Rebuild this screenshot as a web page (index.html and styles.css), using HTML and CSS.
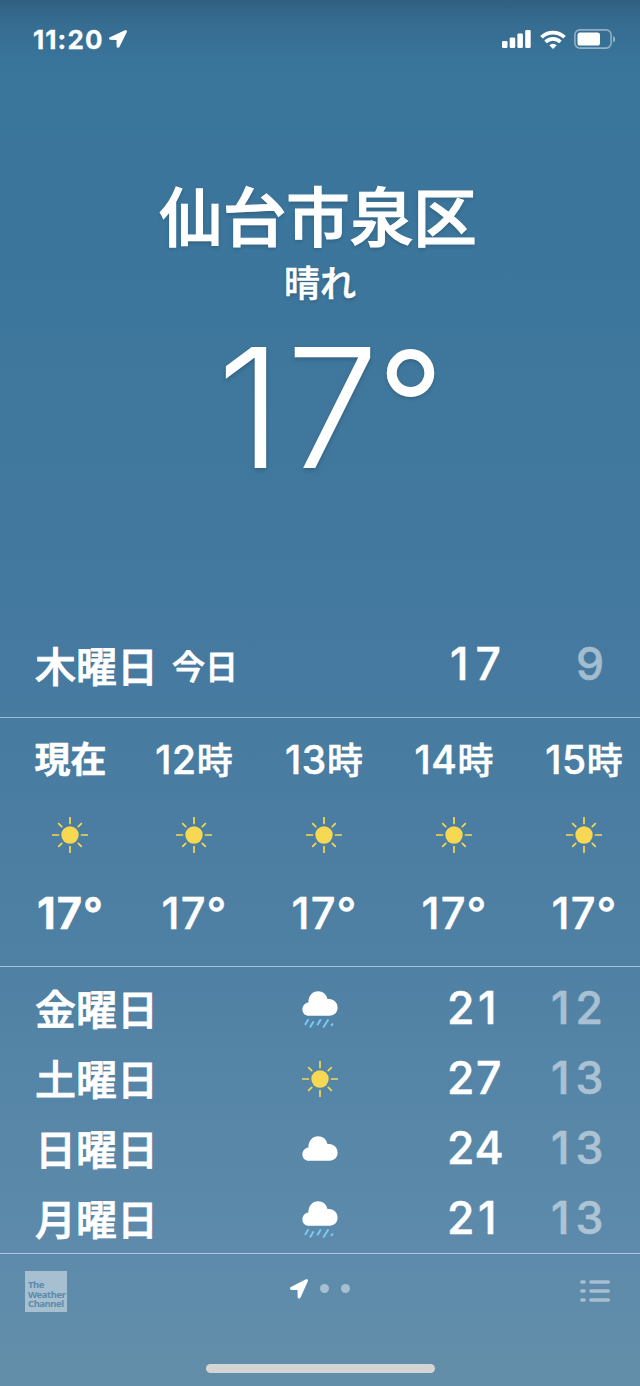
FILE: index.html
```
<!DOCTYPE html>
<html lang="ja">
<head>
    <meta charset="UTF-8">
    <meta name="viewport" content="width=device-width, initial-scale=1.0">
    <title>天気</title>
    <link rel="stylesheet" href="styles.css">
</head>
<body>
    <!-- 共通アイコン -->
    <svg class="sprite" width="0" height="0">
        <symbol id="sun" viewBox="0 0 36 36">
            <circle cx="18" cy="18" r="8.7" fill="#f6d852"/>
            <path d="M18 .3v6.2M18 29.5v6.2M.3 18h6.2M29.5 18h6.2M6.7 6.7l3 3M26.3 26.3l3 3M6.7 29.3l3-3M26.3 9.7l3-3" stroke="#f6d852" stroke-width="1.7" stroke-linecap="round"/>
        </symbol>
        <symbol id="cloud" viewBox="0 0 36 25">
            <path d="M6.8 24.7C3 24.7.4 22 .4 18.4c0-3.600 2.500-6.300 6-6.900C6.300 5 10.300.3 16.200.3c4.500 0 8.200 2.900 9.400 7.900 5.400-.9 10 3 10 8.300 0 4.800-3.300 8.200-8.100 8.200z" fill="#fff"/>
        </symbol>
        <symbol id="rain" viewBox="0 0 36 37">
            <use href="#cloud" width="36" height="25"/>
            <path d="M6 29l-2.600 4.200M11.200 31l-2.800 4.700M18.400 29l-2.700 4.500M26 29l-4.300 6.800M30.400 33.200l-.7.900" stroke="#7cc8f7" stroke-width="2" stroke-linecap="round" fill="none"/>
        </symbol>
        <symbol id="arrow" viewBox="0 0 18 20">
            <path d="M16.200.9L1.200 8.600c-1 .6-.7 1.700.4 1.700l6.500.1.100 7.600c0 1.200 1.200 1.400 1.800.3l7.300-16.200c.3-.9-.3-1.600-1.100-1.200z" fill="#fff" stroke="#fff" stroke-width="1.200" stroke-linejoin="round"/>
        </symbol>
    </svg>

    <div class="phone">
        <header class="status-bar">
            <div class="clock">11:20</div>
            <svg class="clock-arrow" viewBox="0 0 18 20" preserveAspectRatio="none"><use href="#arrow" width="18" height="20"/></svg>
            <div class="status-icons">
                <svg class="signal" width="29" height="18" viewBox="0 0 29 18" fill="#fff">
                    <rect x="0" y="11" width="5.500" height="7" rx="1.300"/>
                    <rect x="7.700" y="7.500" width="5.500" height="10.500" rx="1.300"/>
                    <rect x="15.400" y="3.500" width="5.500" height="14.500" rx="1.300"/>
                    <rect x="23.200" y="0" width="5.500" height="18" rx="1.300"/>
                </svg>
                <svg class="wifi" width="26" height="19" viewBox="0 0 26 19" fill="none" stroke="#fff" stroke-width="3.700">
                    <path d="M1.500 7.300a16.400 16.400 0 0 1 23 0"/>
                    <path d="M5.600 12a10.400 10.400 0 0 1 14.800 0"/>
                    <path d="M13 19l-3.700-3.700a5.300 5.300 0 0 1 7.400 0z" fill="#fff" stroke="none"/>
                </svg>
                <svg class="battery" width="42" height="20" viewBox="0 0 42 20">
                    <rect x=".9" y=".9" width="36.200" height="18.200" rx="5" fill="none" stroke="#fff" stroke-opacity=".45" stroke-width="1.600"/>
                    <rect x="3.500" y="3.500" width="22.500" height="13" rx="2.600" fill="#fff"/>
                    <path d="M39.200 7v6.400c2.500-1 2.500-5.400 0-6.400z" fill="#fff" fill-opacity=".5"/>
                </svg>
            </div>
        </header>

        <section class="current">
            <h1 class="city">仙台市泉区</h1>
            <div class="condition">晴れ</div>
            <div class="temperature">17<span class="degree">°</span></div>
        </section>

        <section class="today">
            <span class="day">木曜日</span>
            <span class="today-label">今日</span>
            <span class="high teen">17</span>
            <span class="low">9</span>
        </section>

        <section class="hourly">
            <div class="hour now">
                <div class="time">現在</div>
                <svg class="sun"><use href="#sun"/></svg>
                <div class="temp">17°</div>
            </div>
            <div class="hour">
                <div class="time"><span>12</span>時</div>
                <svg class="sun"><use href="#sun"/></svg>
                <div class="temp">17°</div>
            </div>
            <div class="hour">
                <div class="time"><span>13</span>時</div>
                <svg class="sun"><use href="#sun"/></svg>
                <div class="temp">17°</div>
            </div>
            <div class="hour">
                <div class="time"><span>14</span>時</div>
                <svg class="sun"><use href="#sun"/></svg>
                <div class="temp">17°</div>
            </div>
            <div class="hour">
                <div class="time"><span>15</span>時</div>
                <svg class="sun"><use href="#sun"/></svg>
                <div class="temp">17°</div>
            </div>
        </section>

        <section class="daily">
            <div class="row">
                <span class="day">金曜日</span>
                <svg class="rain"><use href="#rain"/></svg>
                <span class="high wide">21</span>
                <span class="low">12</span>
            </div>
            <div class="row">
                <span class="day">土曜日</span>
                <svg class="sun"><use href="#sun"/></svg>
                <span class="high">27</span>
                <span class="low">13</span>
            </div>
            <div class="row">
                <span class="day">日曜日</span>
                <svg class="cloud"><use href="#cloud"/></svg>
                <span class="high tight">24</span>
                <span class="low">13</span>
            </div>
            <div class="row">
                <span class="day">月曜日</span>
                <svg class="rain"><use href="#rain"/></svg>
                <span class="high wide">21</span>
                <span class="low">13</span>
            </div>
        </section>

        <footer class="toolbar">
            <div class="channel">
                <div>The</div>
                <div>Weather</div>
                <div>Channel</div>
            </div>
            <div class="pager">
                <svg class="pager-arrow" viewBox="0 0 18 20"><use href="#arrow" width="18" height="20"/></svg>
                <span class="dot"></span>
                <span class="dot"></span>
            </div>
            <svg class="list" width="30" height="22" viewBox="0 0 30 22" stroke="#fff" stroke-opacity=".45" stroke-width="3.600" stroke-linecap="round">
                <path d="M1.900 2h2.200M11 2h17.200M1.900 11h2.200M11 11h17.200M1.900 20h2.200M11 20h17.200"/>
            </svg>
        </footer>
        <div class="home-bar"></div>
    </div>
</body>
</html>
```
FILE: styles.css
```
* {
    box-sizing: border-box;
}

body {
    margin: 0;
    font-family: Inter, 'Noto Sans CJK JP', sans-serif;
    color: #fff;
}

h1 {
    margin: 0;
}

svg {
    display: block;
    flex: none;
}

.sprite {
    position: absolute;
}

.phone {
    width: 640px;
    height: 1386px;
    overflow: hidden;
    display: flex;
    flex-direction: column;
    background: linear-gradient(#305f80 0, #366c90 22px, #39749a 60px, #3d769c 300px, #45799f 640px, #4e80a3 940px, #5e8bab 1260px, #628ea9 1386px);
}

/* ステータスバー */
.status-bar {
    height: 78px;
    padding: 0 24px 0 33px;
    display: flex;
    align-items: center;
}

.clock {
    width: 70px;
    font-size: 26px;
    font-weight: 700;
    letter-spacing: 1.1px;
    white-space: nowrap;
    -webkit-text-stroke: 0.3px #fff;
}

.clock-arrow {
    width: 18px;
    height: 18px;
    margin-left: 6px;
}

.status-icons {
    margin-left: auto;
    display: flex;
    align-items: center;
    gap: 9px;
}

.battery {
    margin-left: -1px;
}

/* 現在の天気 */
.current {
    height: 535px;
    padding-top: 103px;
    text-align: center;
    text-shadow: 0 2px 4px rgba(0, 0, 0, 0.2);
}

.city {
    height: 73px;
    line-height: 73px;
    padding-right: 4px;
    font-size: 63.500px;
    font-weight: 500;
    -webkit-text-stroke: 1.2px #fff;
}

.condition {
    height: 60px;
    line-height: 60px;
    font-size: 36px;
    font-weight: 500;
    -webkit-text-stroke: 0.6px #fff;
}

.temperature {
    height: 190px;
    line-height: 188px;
    padding-left: 20px;
    font-size: 166px;
    font-weight: 300;
    letter-spacing: 4px;
}

.degree {
    margin-left: -5px;
    font-size: 144px;
    line-height: 1;
    letter-spacing: 0;
    vertical-align: 12px;
    -webkit-text-stroke: 1.8px #fff;
}

/* 今日 */
.today {
    height: 105px;
    padding: 0 0 3px 35px;
    display: flex;
    align-items: center;
    border-bottom: 1px solid rgba(255, 255, 255, 0.5);
}

.day {
    width: 121px;
    font-size: 41px;
    font-weight: 500;
    white-space: nowrap;
    -webkit-text-stroke: 0.8px #fff;
}

.today-label {
    width: 66px;
    margin-left: 16px;
    padding-top: 2px;
    font-size: 33px;
    font-weight: 500;
    -webkit-text-stroke: 0.8px #fff;
}

.high,
.low {
    font-size: 44.500px;
    font-weight: 500;
    font-kerning: none;
    letter-spacing: 1.500px;
    -webkit-text-stroke: 0.5px #fff;
}

.high.teen {
    width: 126px;
    margin-left: 212px;
    letter-spacing: 7px;
}

.high.wide {
    letter-spacing: 3.500px;
}

.high.tight {
    letter-spacing: 0;
}

.low {
    opacity: 0.5;
    letter-spacing: 6px;
}

/* 時間ごと */
.hourly {
    height: 249px;
    display: flex;
    border-bottom: 1px solid rgba(255, 255, 255, 0.5);
}

.hour {
    width: 130px;
    flex: none;
    display: flex;
    flex-direction: column;
    align-items: center;
}

.hour.now {
    width: 129px;
    padding-left: 11px;
}

.time {
    height: 84px;
    line-height: 84px;
    font-size: 36px;
    font-weight: 500;
    white-space: nowrap;
    -webkit-text-stroke: 0.5px #fff;
}

.time span {
    font-size: 39px;
    letter-spacing: 0.7px;
}

.sun {
    width: 36px;
    height: 36px;
}

.hour .sun {
    margin-top: 15px;
}

.temp {
    height: 60px;
    margin-top: 30px;
    padding-left: 1px;
    line-height: 60px;
    font-size: 43.500px;
    font-weight: 500;
    letter-spacing: 1px;
    -webkit-text-stroke: 0.4px #fff;
}

.now .time,
.now .temp {
    font-weight: 700;
}

.now .time {
    padding-left: 1px;
}

/* 週間 */
.daily {
    height: 287px;
    padding-top: 7px;
    border-bottom: 1px solid rgba(255, 255, 255, 0.5);
}

.row {
    height: 70px;
    padding: 0 0 0 35px;
    display: grid;
    grid-template-columns: 225px 120px 67px 104px 88px;
    align-items: center;
}

.row .day {
    margin-top: -4px;
}

.row .high {
    grid-column: 4;
    margin-top: -2px;
}

.row .low {
    margin-top: -2px;
}

.row svg {
    justify-self: center;
}

.row .sun {
    margin-left: -1px;
}

.rain {
    width: 36px;
    height: 37px;
}

.cloud {
    width: 36px;
    height: 25px;
}

.row .cloud {
    margin-top: -2px;
}

/* 下部バー */
.toolbar {
    height: 110px;
    padding: 17px 30px 0 25px;
    display: grid;
    grid-template-columns: 1fr 62px 1fr;
    align-items: start;
}

.channel {
    width: 42px;
    height: 41px;
    padding: 9px 0 0 3px;
    background: rgba(255, 255, 255, 0.45);
    color: #5c8bab;
    font-family: 'Noto Sans', sans-serif;
    font-size: 9.500px;
    font-weight: 700;
    line-height: 9.700px;
    letter-spacing: -0.450px;
}

.pager {
    height: 35px;
    margin-left: 3px;
    display: flex;
    align-items: center;
    gap: 12px;
}

.pager-arrow {
    width: 18px;
    height: 20px;
}

.dot {
    width: 9px;
    height: 9px;
    flex: none;
    border-radius: 50%;
    background: rgba(255, 255, 255, 0.45);
}

.list {
    justify-self: end;
    margin-top: 9px;
}

.home-bar {
    width: 229px;
    height: 9px;
    margin: 0 auto;
    border-radius: 5px;
    background: #d5d5d5;
}
```
